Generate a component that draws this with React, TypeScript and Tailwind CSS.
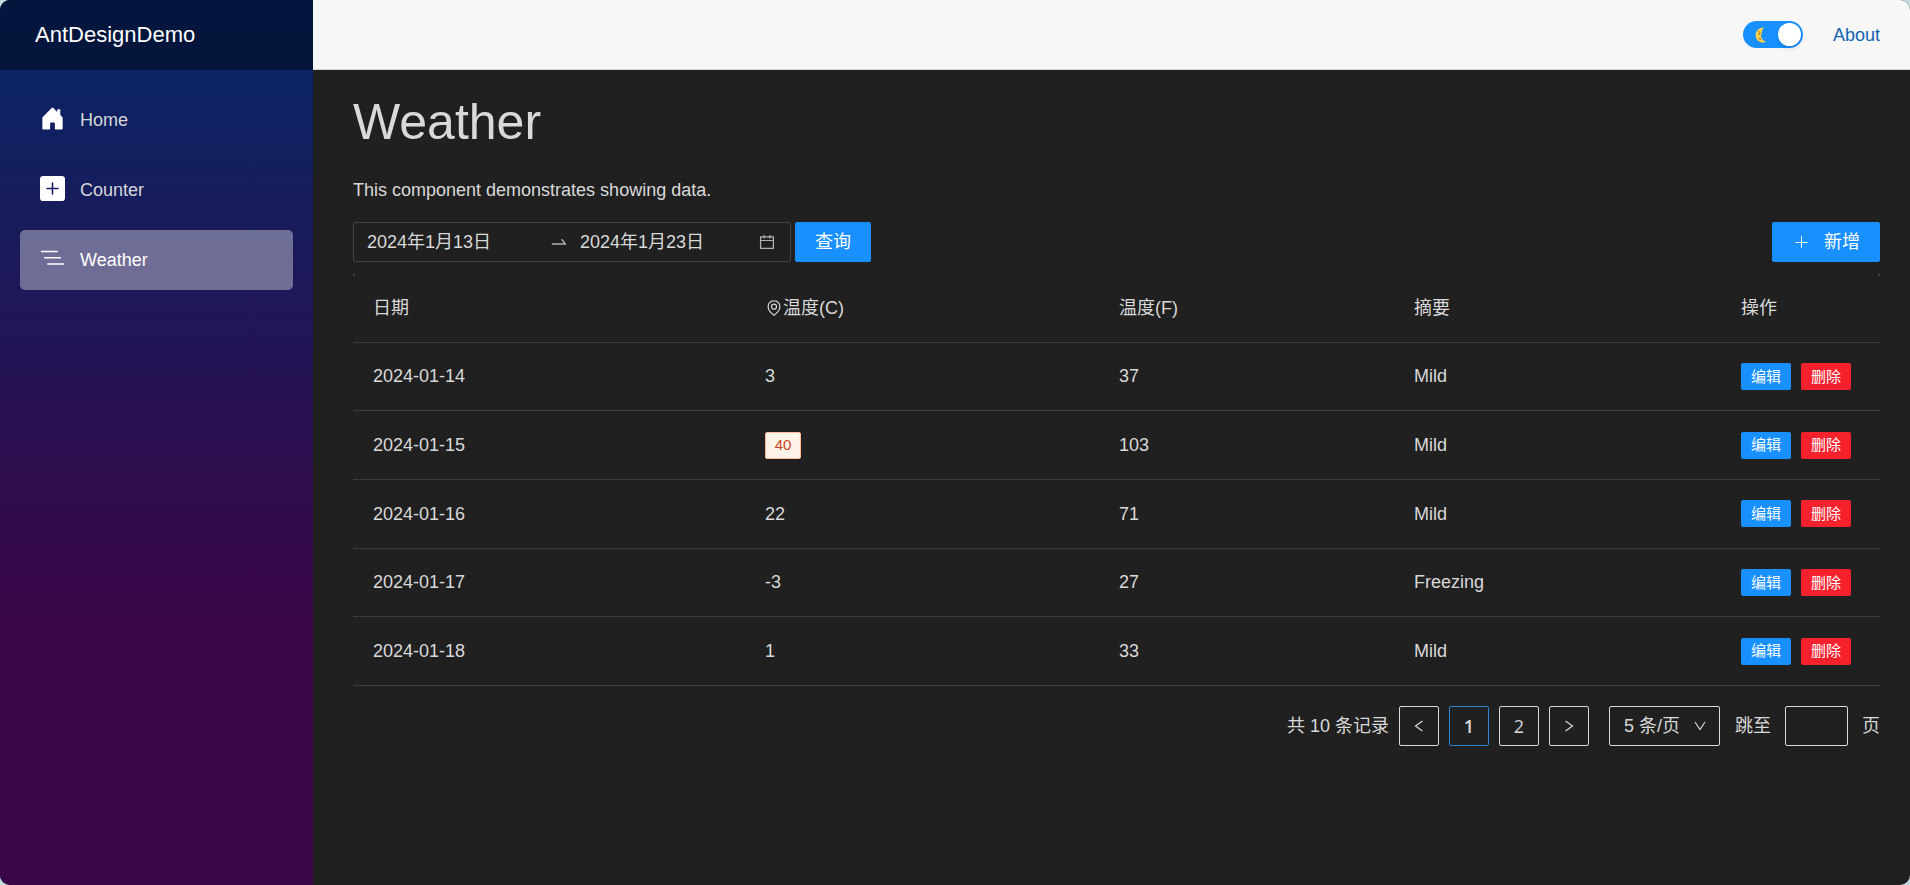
import { useState } from "react";
import { BsHouseDoorFill, BsListNested, BsPlusSquareFill } from "react-icons/bs";

const navItems = [
  { label: "Home", href: "#home", icon: BsHouseDoorFill },
  { label: "Counter", href: "#counter", icon: BsPlusSquareFill },
  { label: "Weather", href: "#weather", icon: BsListNested },
];

const forecasts = [
  { date: "2024-01-14", c: 3, f: 37, summary: "Mild" },
  { date: "2024-01-15", c: 40, f: 103, summary: "Mild" },
  { date: "2024-01-16", c: 22, f: 71, summary: "Mild" },
  { date: "2024-01-17", c: -3, f: 27, summary: "Freezing" },
  { date: "2024-01-18", c: 1, f: 33, summary: "Mild" },
];

function MoonIcon() {
  return (
    <svg viewBox="0 0 11 16" className="h-4 w-[11px]" aria-hidden="true">
      <path d="M9 .6C4.600.5.7 3.600.6 7.900.5 12.300 4 15.500 8 15.500c1.200 0 2.100-.3 2.800-.9-2.300-.7-3.900-2.300-4.200-4.300L5.500 9l1.100-1.300C6.500 4.700 7.400 2.300 9 .6z" fill="#ffd14a" />
      <path d="M3.400 4.600l2 .9M3.600 7.200h1.600M3.600 11.200c.7.800 1.700 1 2.600.7" fill="none" stroke="#7a5418" strokeWidth="1" />
    </svg>
  );
}

function SwapIcon() {
  return (
    <svg viewBox="0 0 1024 1024" className="size-5 text-[#b0b0b0]" fill="currentColor" aria-hidden="true">
      <path d="M873.1 596.2l-164-208A32 32 0 00684 376h-64.800c-6.700 0-10.400 7.700-6.300 13l144.300 183H152c-4.400 0-8 3.600-8 8v60c0 4.400 3.600 8 8 8h695.900c26.800 0 41.700-30.800 25.200-51.800z" />
    </svg>
  );
}

function CalendarIcon() {
  return (
    <svg viewBox="0 0 1024 1024" className="size-[18px] text-[#b0b0b0]" fill="currentColor" aria-hidden="true">
      <path d="M880 184H712v-64c0-4.400-3.600-8-8-8h-56c-4.400 0-8 3.600-8 8v64H384v-64c0-4.400-3.600-8-8-8h-56c-4.400 0-8 3.600-8 8v64H144c-17.700 0-32 14.300-32 32v664c0 17.700 14.300 32 32 32h736c17.700 0 32-14.300 32-32V216c0-17.700-14.300-32-32-32zm-40 656H184V460h656v380zM184 392V256h128v48c0 4.400 3.600 8 8 8h56c4.400 0 8-3.600 8-8v-48h256v48c0 4.400 3.600 8 8 8h56c4.400 0 8-3.600 8-8v-48h128v136H184z" />
    </svg>
  );
}

function PinIcon() {
  return (
    <svg viewBox="0 0 18 18" className="size-[18px]" fill="none" stroke="currentColor" strokeWidth="1.2" aria-hidden="true">
      <path d="M9 1.700c-3.300 0-5.900 2.500-5.900 5.900 0 3.900 3.500 7 5.900 8.700 2.400-1.700 5.900-4.800 5.900-8.700C14.900 4.200 12.300 1.700 9 1.700z" />
      <circle cx="9" cy="7.700" r="2.500" />
    </svg>
  );
}

function PlusIcon() {
  return (
    <svg viewBox="0 0 18 18" className="size-[18px]" stroke="currentColor" strokeWidth="1" aria-hidden="true">
      <path d="M9.500 3v12M3.500 9.500h12" />
    </svg>
  );
}

function Chevron({ d, className }: { d: string; className?: string }) {
  return (
    <svg viewBox="0 0 12 12" className={className ?? "size-3"} fill="none" stroke="currentColor" strokeWidth="1.2" aria-hidden="true">
      <path d={d} />
    </svg>
  );
}

function Sidebar() {
  return (
    <aside className="w-[313px] shrink-0 bg-linear-[180deg,#052767_0%,#3a0647_70%]">
      <div className="flex h-[70px] items-center bg-black/40 px-[35px]">
        <a href="#home" className="text-[22px] text-white">AntDesignDemo</a>
      </div>
      <nav className="flex flex-col gap-[10px] p-5">
        {navItems.map(({ label, href, icon: Icon }) => (
          <a
            key={label}
            href={href}
            className={`flex h-[60px] items-center gap-[15px] rounded-[5px] px-5 text-lg ${
              label === "Weather" ? "bg-white/37 text-white" : "text-[#d7d7d7]"
            }`}
          >
            <Icon className="mb-1 size-[25px] text-white" />
            {label}
          </a>
        ))}
      </nav>
    </aside>
  );
}

function TopBar() {
  const [dark, setDark] = useState(true);
  return (
    <header className="flex h-[70px] items-center justify-end gap-[30px] border-b border-[#d6d5d5] bg-[#f7f7f7] pr-[30px]">
      <button
        type="button"
        role="switch"
        aria-checked={dark}
        aria-label="Dark mode"
        onClick={() => setDark(!dark)}
        className="flex h-[27px] w-[60px] items-center justify-between rounded-full bg-[#1890ff] pr-[2px] pl-3"
      >
        <MoonIcon />
        <span className="size-[23px] rounded-full bg-white shadow-md" />
      </button>
      <a href="#about" className="text-lg text-[#1264b0]">About</a>
    </header>
  );
}

function Filters() {
  return (
    <div className="flex items-center justify-between">
      <div className="flex gap-1">
        <div className="flex h-10 w-[438px] items-center rounded-xs border border-[#434343] pr-[14px] pl-[13px]">
          <input aria-label="开始日期" defaultValue="2024年1月13日" className="w-[182px] min-w-0 outline-none" />
          <SwapIcon />
          <input aria-label="结束日期" defaultValue="2024年1月23日" className="ml-[11px] min-w-0 flex-1 outline-none" />
          <CalendarIcon />
        </div>
        <button type="button" className="h-10 rounded-xs bg-[#1890ff] px-5 text-white">查询</button>
      </div>
      <button type="button" className="flex h-10 items-center gap-[14px] rounded-xs bg-[#1890ff] px-5 text-white">
        <PlusIcon />
        新增
      </button>
    </div>
  );
}

function ForecastTable() {
  return (
    <div className="relative mt-3 before:absolute before:top-0 before:left-0 before:size-[2px] before:rounded-tl-xs before:border-t before:border-l before:border-[#5a5a5a] after:absolute after:top-0 after:right-0 after:size-[2px] after:rounded-tr-xs after:border-t after:border-r after:border-[#5a5a5a]">
      <table className="h-[412px] w-full table-fixed text-left">
        <colgroup>
          <col className="w-[392px]" />
          <col className="w-[354px]" />
          <col className="w-[295px]" />
          <col className="w-[327px]" />
          <col className="w-[159px]" />
        </colgroup>
        <thead>
          <tr className="h-[68px] border-b border-[#3c3c3c]">
            <th className="px-5 font-normal">日期</th>
            <th className="px-5 font-normal">
              <span className="flex items-center">
                <PinIcon />
                温度(C)
              </span>
            </th>
            <th className="px-5 font-normal">温度(F)</th>
            <th className="px-5 font-normal">摘要</th>
            <th className="px-5 font-normal">操作</th>
          </tr>
        </thead>
        <tbody>
          {forecasts.map((row) => (
            <tr key={row.date} className="h-[68px] border-b border-[#3c3c3c]">
              <td className="px-5">{row.date}</td>
              <td className="px-5">
                {row.c >= 40 ? (
                  <span className="flex h-[27px] w-9 items-center justify-center rounded-xs border border-[#ffbb96] bg-[#fff2e8] text-[15px] text-[#c4492a]">
                    {row.c}
                  </span>
                ) : (
                  row.c
                )}
              </td>
              <td className="px-5">{row.f}</td>
              <td className="px-5">{row.summary}</td>
              <td className="px-5">
                <div className="flex gap-[10px] text-[15px] text-white">
                  <button type="button" className="h-[27px] rounded-xs bg-[#1890ff] px-[10px]">编辑</button>
                  <button type="button" className="h-[27px] rounded-xs bg-[#f5222d] px-[10px]">删除</button>
                </div>
              </td>
            </tr>
          ))}
        </tbody>
      </table>
    </div>
  );
}

function Pagination() {
  return (
    <div className="mt-5 flex items-center justify-end">
      <span className="mr-[10px]">共 10 条记录</span>
      <div className="flex gap-[10px] font-['Open_Sans',sans-serif]">
        <button type="button" aria-label="上一页" className="flex size-10 items-center justify-center rounded-xs border border-[#d9d9d9]">
          <Chevron d="M9.500 1 2.500 6l7 5" />
        </button>
        <button type="button" className="size-10 rounded-xs border border-[#2f86d2] font-semibold">1</button>
        <button type="button" className="size-10 rounded-xs border border-[#d9d9d9]">2</button>
        <button type="button" aria-label="下一页" className="flex size-10 items-center justify-center rounded-xs border border-[#d9d9d9]">
          <Chevron d="M2.500 1l7 5-7 5" />
        </button>
      </div>
      <div className="relative ml-5">
        <select aria-label="每页条数" className="h-10 w-[111px] appearance-none rounded-xs border border-[#d9d9d9] pl-[14px]">
          <option>5 条/页</option>
        </select>
        <Chevron d="M1 2l5 7.500L11 2" className="pointer-events-none absolute top-[14px] right-[14px] size-3" />
      </div>
      <label className="ml-[15px] flex items-center gap-[14px]">
        跳至
        <input className="h-10 w-[63px] rounded-xs border border-[#d9d9d9] px-3 outline-none" />
        页
      </label>
    </div>
  );
}

export default function App() {
  return (
    <div className="min-h-screen bg-[#c5dcdf]">
      <div className="flex min-h-screen overflow-hidden rounded-[10px] bg-[#202020] font-['Liberation_Sans','Noto_Sans_CJK_SC',sans-serif] text-lg text-[#d9d9d9]">
        <Sidebar />
        <div className="min-w-0 flex-1">
          <TopBar />
          <main className="pt-5 pr-[30px] pl-10">
            <h1 className="text-[50px] leading-[64px]">Weather</h1>
            <p className="mt-[22px] mb-[18px]">This component demonstrates showing data.</p>
            <Filters />
            <ForecastTable />
            <Pagination />
          </main>
        </div>
      </div>
    </div>
  );
}
